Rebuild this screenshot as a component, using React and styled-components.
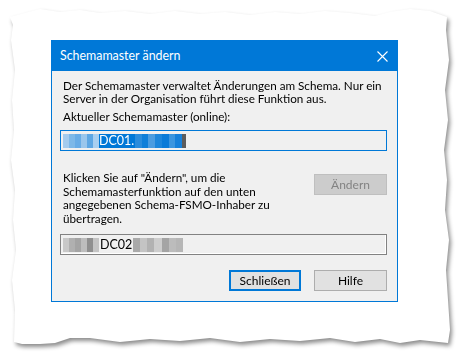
import styled, { createGlobalStyle } from "styled-components";

const GlobalStyle = createGlobalStyle`
    html, body {
        margin: 0;
        padding: 0;
        background: #ffffff;
    }
`

const Stage = styled.div`
    width: 464px;
    height: 358px;
    filter: drop-shadow(2px 3px 2px rgba(0, 0, 0, 0.45));
`

const tornEdge = [
    [10, 17], [25, 13], [40, 9], [60, 12], [80, 10], [100, 13], [125, 11], [150, 14],
    [175, 11], [200, 14], [225, 12], [250, 15], [275, 12], [300, 14], [325, 11], [350, 13],
    [375, 16], [390, 12], [410, 9], [430, 11], [447, 17],
    [446, 30], [449, 60], [445, 90], [448, 120], [444, 150], [447, 180], [445, 210],
    [449, 240], [446, 270], [448, 300], [450, 330], [448, 343],
    [420, 340], [400, 343], [380, 339], [355, 342], [330, 338], [300, 341], [270, 339],
    [240, 342], [210, 338], [180, 341], [150, 339], [120, 342], [90, 338], [70, 338],
    [55, 343], [40, 344], [22, 344], [14, 342],
    [15, 310], [12, 280], [16, 250], [13, 220], [15, 190], [11, 160], [14, 130],
    [12, 100], [15, 70], [11, 40], [13, 25],
].map(([x, y]) => `${x}px ${y}px`).join(", ");

const Paper = styled.div`
    width: 464px;
    height: 358px;
    box-sizing: border-box;
    padding: 40px 0 0 51px;
    background: #ffffff;
    clip-path: polygon(${tornEdge});
`

const Dialog = styled.div`
    width: 347px;
    box-sizing: border-box;
    border: 1px solid #0078d7;
    background: #f0f0f0;
    font-family: Lato, "Liberation Sans", sans-serif;
    font-size: 11.7px;
    color: #000000;
`

const TitleBar = styled.div`
    height: 30px;
    background: #0078d7;
    color: #ffffff;
    display: flex;
    align-items: center;
    justify-content: space-between;
    padding: 0 9px 0 8px;
`

const Title = styled.span`
    font-size: 12.4px;
    margin-top: -1px;
`

const Body = styled.div`
    padding: 8px 10px 10px 8px;
    display: flex;
    flex-direction: column;
`

const Text = styled.p`
    margin: ${props => props.$mt || 0}px 0 0 3px;
    line-height: ${props => props.$lh || 13}px;
    white-space: nowrap;
`

const Field = styled.div`
    height: 21px;
    box-sizing: border-box;
    margin-top: ${props => props.$mt}px;
    border: 1px solid ${props => props.$focused ? "#0078d7" : "#828282"};
    box-shadow: ${props => props.$focused ? "none" : "inset -1px -1px 0 #ffffff"};
    display: flex;
    align-items: center;
    padding-left: 2px;
`

const Blur = styled.span`
    display: inline-block;
    width: ${props => props.$w}px;
    height: 14px;
    background: linear-gradient(90deg, ${props => props.$colors.map((c, i, a) =>
        `${c} ${(i * 100 / a.length).toFixed(1)}% ${((i + 1) * 100 / a.length).toFixed(1)}%`
    ).join(", ")});
`

const Selected = styled.span`
    background: #0078d7;
    color: #ffffff;
    font-size: 12.5px;
    line-height: 14px;
    height: 14px;
    padding-right: 1px;
`

const Caret = styled.span`
    display: inline-block;
    width: 4px;
    height: 14px;
    background: #5c5c5c;
`

const Plain = styled.span`
    font-size: 12.5px;
    line-height: 14px;
    padding: 0 1px;
`

const Row = styled.div`
    margin-top: 20px;
    display: flex;
    justify-content: space-between;
    align-items: flex-start;
`

const Button = styled.button`
    width: ${props => props.$w}px;
    height: 21px;
    margin-top: ${props => props.$mt || 0}px;
    box-sizing: border-box;
    font-family: inherit;
    font-size: 12px;
    padding: 0;
    background: ${props => props.disabled ? "#cccccc" : "#e1e1e1"};
    color: ${props => props.disabled ? "#838383" : "#000000"};
    border: ${props => props.$default ? "2px solid #0078d7" : props.disabled ? "1px solid #bfbfbf" : "1px solid #adadad"};
`

const Buttons = styled.div`
    margin-top: 15px;
    display: flex;
    justify-content: flex-end;
    gap: 13px;
`

const lightBlue = ["#a3cbee", "#7db8e8", "#68ace6", "#9ac6ec", "#5ea7e4", "#a9cff0"];
const darkBlue = ["#2a8cdc", "#0f7fd9", "#4b9ce0", "#1d86db", "#0a7bd8", "#3b95df", "#1680da"];
const grayLeft = ["#c8c8c8", "#b0b0b0", "#a4a4a4", "#bdbdbd", "#8f8f8f", "#c4c4c4"];
const grayRight = ["#a9a9a9", "#c4c4c4", "#b2b2b2", "#cdcdcd", "#a4a4a4", "#bcbcbc", "#b6b6b6"];

const CloseIcon = () => (
    <svg width="11" height="11" viewBox="0 0 11 11">
        <path d="M0.5 0.5 L10.5 10.5 M10.5 0.5 L0.5 10.5" stroke="#ffffff" strokeWidth="1.1" fill="none" />
    </svg>
)

export default function App() {
    return (
        <>
            <GlobalStyle />
            <Stage>
                <Paper>
                    <Dialog>
                        <TitleBar>
                            <Title>Schemamaster ändern</Title>
                            <CloseIcon />
                        </TitleBar>
                        <Body>
                            <Text>
                                Der Schemamaster verwaltet Änderungen am Schema. Nur ein<br />
                                Server in der Organisation führt diese Funktion aus.
                            </Text>
                            <Text $mt={5}>Aktueller Schemamaster (online):</Text>
                            <Field $mt={7} $focused>
                                <Blur $w={36} $colors={lightBlue} />
                                <Selected>DC01.</Selected>
                                <Blur $w={47} $colors={darkBlue} />
                                <Caret />
                            </Field>
                            <Row>
                                <Text $lh={13.5}>
                                    Klicken Sie auf "Ändern", um die<br />
                                    Schemamasterfunktion auf den unten<br />
                                    angegebenen Schema-FSMO-Inhaber zu<br />
                                    übertragen.
                                </Text>
                                <Button $w={73} $mt={3} disabled>Ändern</Button>
                            </Row>
                            <Field $mt={9}>
                                <Blur $w={36} $colors={grayLeft} />
                                <Plain>DC02</Plain>
                                <Blur $w={50} $colors={grayRight} />
                            </Field>
                            <Buttons>
                                <Button $w={72} $default>Schließen</Button>
                                <Button $w={73}>Hilfe</Button>
                            </Buttons>
                        </Body>
                    </Dialog>
                </Paper>
            </Stage>
        </>
    )
}
